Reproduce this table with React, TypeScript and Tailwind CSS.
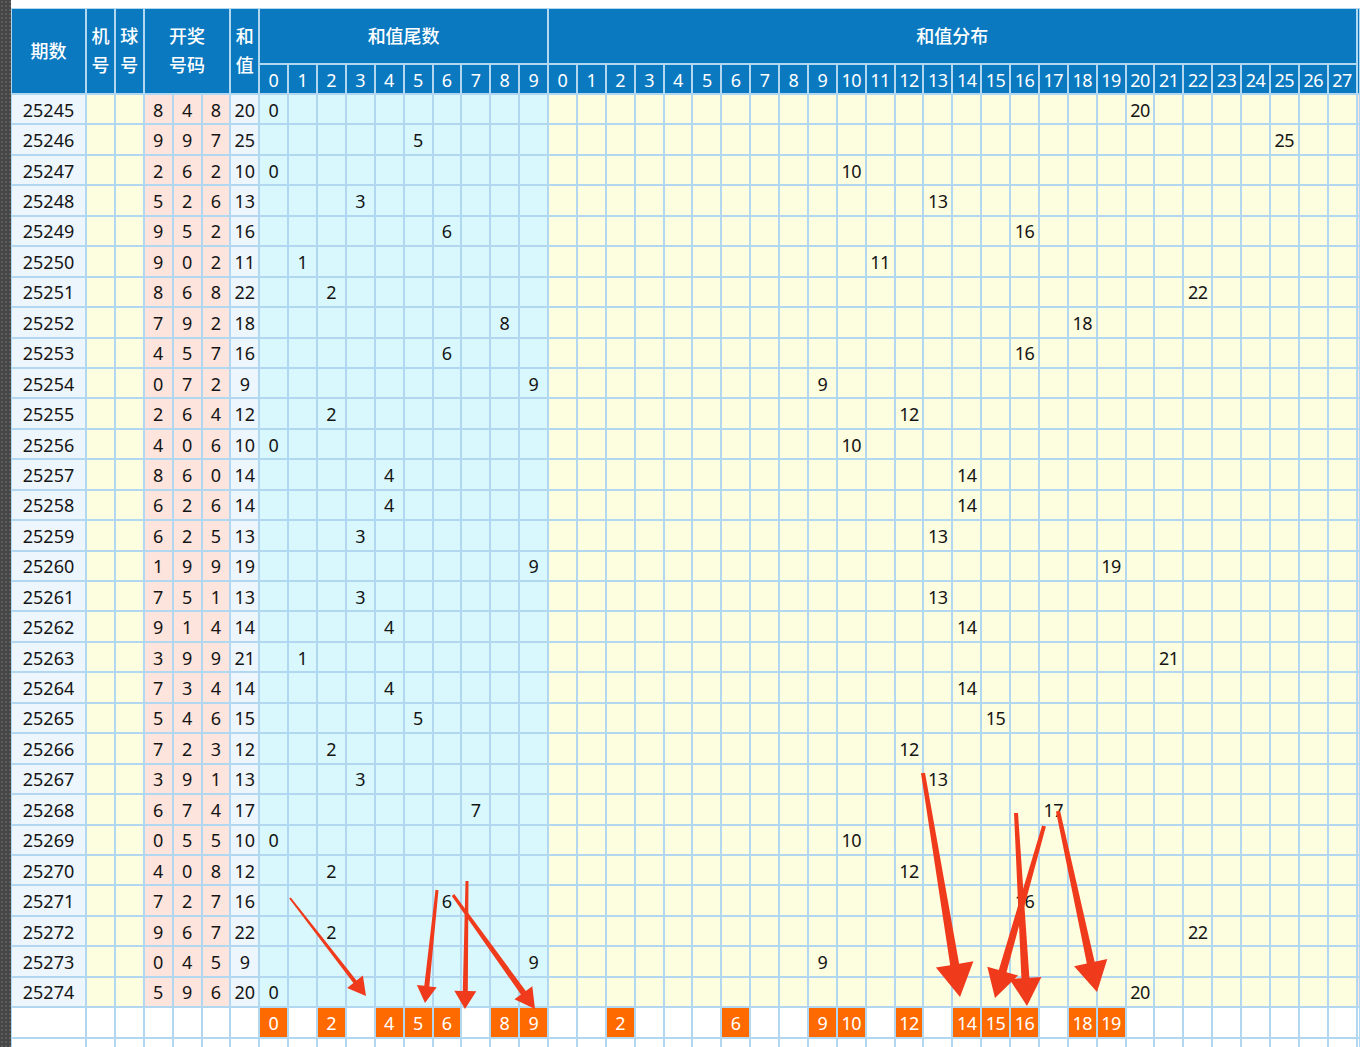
import React from "react";

const draws: [string, number[]][] = [
  ["25245", [8, 4, 8]],
  ["25246", [9, 9, 7]],
  ["25247", [2, 6, 2]],
  ["25248", [5, 2, 6]],
  ["25249", [9, 5, 2]],
  ["25250", [9, 0, 2]],
  ["25251", [8, 6, 8]],
  ["25252", [7, 9, 2]],
  ["25253", [4, 5, 7]],
  ["25254", [0, 7, 2]],
  ["25255", [2, 6, 4]],
  ["25256", [4, 0, 6]],
  ["25257", [8, 6, 0]],
  ["25258", [6, 2, 6]],
  ["25259", [6, 2, 5]],
  ["25260", [1, 9, 9]],
  ["25261", [7, 5, 1]],
  ["25262", [9, 1, 4]],
  ["25263", [3, 9, 9]],
  ["25264", [7, 3, 4]],
  ["25265", [5, 4, 6]],
  ["25266", [7, 2, 3]],
  ["25267", [3, 9, 1]],
  ["25268", [6, 7, 4]],
  ["25269", [0, 5, 5]],
  ["25270", [4, 0, 8]],
  ["25271", [7, 2, 7]],
  ["25272", [9, 6, 7]],
  ["25273", [0, 4, 5]],
  ["25274", [5, 9, 6]],
];

const tailHits = [0, 2, 4, 5, 6, 8, 9];
const distHits = [2, 6, 9, 10, 12, 14, 15, 16, 18, 19];

const tails = Array.from({ length: 10 }, (_, i) => i);
const dists = Array.from({ length: 28 }, (_, i) => i);

const cell = "flex items-center justify-center pt-px text-[18px] leading-none text-[#151515]";
const head = "flex items-center justify-center bg-[#0a79bf] text-[18px] text-white";

type Arrow = [number, number, number, number, number, number, number, number];
const arrows: Arrow[] = [
  [290, 898, 366, 996, 2, 4, 18, 20],
  [437, 890, 425, 1003, 3, 5, 17, 20],
  [467, 881, 465, 1009, 3, 5, 18, 22],
  [453, 895, 535, 1009, 3, 6, 20, 22],
  [923, 773, 960, 997, 4, 9, 33, 38],
  [1016, 813, 1027, 1006, 4, 8, 28, 32],
  [1044, 826, 995, 998, 4, 8, 28, 32],
  [1058, 811, 1097, 992, 4, 8, 30, 34],
];

function arrowPoints([x1, y1, x2, y2, w0, w1, hl, hw]: Arrow): string {
  const dx = x2 - x1;
  const dy = y2 - y1;
  const len = Math.hypot(dx, dy);
  const ux = dx / len;
  const uy = dy / len;
  const nx = -uy;
  const ny = ux;
  const bx = x2 - ux * hl;
  const by = y2 - uy * hl;
  const pts = [
    [x1 + (nx * w0) / 2, y1 + (ny * w0) / 2],
    [bx + (nx * w1) / 2, by + (ny * w1) / 2],
    [bx + (nx * hw) / 2, by + (ny * hw) / 2],
    [x2, y2],
    [bx - (nx * hw) / 2, by - (ny * hw) / 2],
    [bx - (nx * w1) / 2, by - (ny * w1) / 2],
    [x1 - (nx * w0) / 2, y1 - (ny * w0) / 2],
  ];
  return pts.map((p) => `${p[0].toFixed(1)},${p[1].toFixed(1)}`).join(" ");
}

export default function App() {
  return (
    <div className="relative flex h-[1047px] w-[1360px] overflow-hidden bg-white font-['Noto_Sans','Noto_Sans_CJK_SC',sans-serif]">
      <div className="h-full w-[11px] shrink-0 bg-[#464646] bg-[radial-gradient(circle,#5c5c5c_0.8px,transparent_1.1px)] bg-[length:4px_4px]" />
      <div className="flex min-w-0 flex-1 flex-col">
        <div className="h-[8px] shrink-0 bg-white" />
        <div className="grid flex-1 grid-cols-[73px_repeat(44,26.88px)_1fr] grid-rows-[54px_28px_repeat(31,28.45px)_1fr] gap-[2px] bg-[#b2d8f1] p-px pb-0">
          {/* header row 1 */}
          <div className={head + " row-span-2 font-medium"}>期数</div>
          <div className={head + " row-span-2 flex-col font-medium leading-[29px]"}>
            <span>机</span>
            <span>号</span>
          </div>
          <div className={head + " row-span-2 flex-col font-medium leading-[29px]"}>
            <span>球</span>
            <span>号</span>
          </div>
          <div className={head + " col-span-3 row-span-2 flex-col font-medium leading-[29px]"}>
            <span>开奖</span>
            <span>号码</span>
          </div>
          <div className={head + " row-span-2 flex-col font-medium leading-[29px]"}>
            <span>和</span>
            <span>值</span>
          </div>
          <div className={head + " col-span-10 font-medium"}>和值尾数</div>
          <div className={head + " col-span-28 font-medium"}>和值分布</div>
          <div className="row-span-2 bg-[#0a79bf]" />
          {/* header row 2 */}
          {tails.map((d) => (
            <div key={"ht" + d} className={head + " pt-px leading-none"}>
              {d}
            </div>
          ))}
          {dists.map((d) => (
            <div key={"hd" + d} className={head + " pt-px leading-none tracking-[-0.5px]"}>
              {d}
            </div>
          ))}
          {/* data rows */}
          {draws.map(([issue, nums]) => {
            const sum = nums[0] + nums[1] + nums[2];
            const tail = sum % 10;
            return (
              <React.Fragment key={issue}>
                <div className={cell + " bg-[#eef6fd]"}>{issue}</div>
                <div className="bg-[#fdfde0]" />
                <div className="bg-[#fdfde0]" />
                {nums.map((n, i) => (
                  <div key={i} className={cell + " bg-[#fde4dc]"}>
                    {n}
                  </div>
                ))}
                <div className={cell + " bg-[#eef6fd]"}>{sum}</div>
                {tails.map((d) => (
                  <div key={"t" + d} className={cell + " bg-[#d8f8fd]"}>
                    {d === tail ? d : ""}
                  </div>
                ))}
                {dists.map((d) => (
                  <div key={"d" + d} className={cell + " bg-[#fdfde0] tracking-[-0.5px]"}>
                    {d === sum ? d : ""}
                  </div>
                ))}
                <div className="bg-[#fde5e1]" />
              </React.Fragment>
            );
          })}
          {/* bottom summary row */}
          {Array.from({ length: 7 }, (_, i) => (
            <div key={"bl" + i} className="bg-white" />
          ))}
          {tails.map((d) =>
            tailHits.includes(d) ? (
              <div key={"bt" + d} className="flex items-center justify-center bg-[#ff6a00] pt-px text-[18px] leading-none text-white">
                {d}
              </div>
            ) : (
              <div key={"bt" + d} className="bg-white" />
            )
          )}
          {dists.map((d) =>
            distHits.includes(d) ? (
              <div key={"bd" + d} className="flex items-center justify-center bg-[#ff6a00] pt-px text-[18px] leading-none tracking-[-0.5px] text-white">
                {d}
              </div>
            ) : (
              <div key={"bd" + d} className="bg-white" />
            )
          )}
          <div className="bg-white" />
          {/* trailing blank row */}
          {Array.from({ length: 46 }, (_, i) => (
            <div key={"e" + i} className="bg-white" />
          ))}
        </div>
      </div>
      <svg className="pointer-events-none absolute left-0 top-0" width={1360} height={1047} viewBox="0 0 1360 1047">
        {arrows.map((a, i) => (
          <polygon key={i} points={arrowPoints(a)} fill="#f03a1c" />
        ))}
      </svg>
    </div>
  );
}
